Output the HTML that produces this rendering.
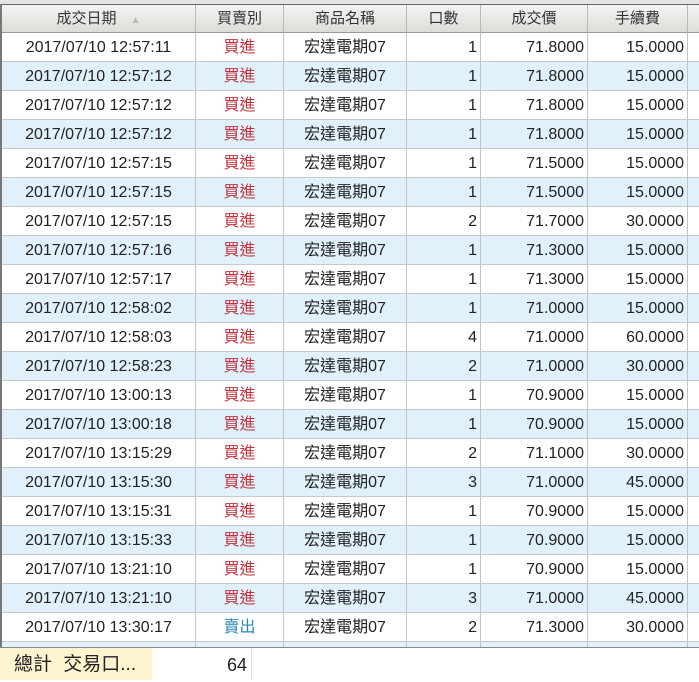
<!DOCTYPE html>
<html><head><meta charset="utf-8"><style>
body{margin:0;width:699px;height:680px;overflow:hidden;background:#fff;font-family:"Liberation Sans","Noto Sans CJK TC",sans-serif;font-size:16px;color:#222;position:relative}
.top{position:absolute;left:0;top:0;width:699px;height:4px;background:#e4e4e4;border-bottom:1px solid #666}
.lb{position:absolute;left:0;top:4px;width:2px;height:643px;background:#777}
.hdr{position:absolute;top:5px;height:27px;border-right:1px solid #b8b8b8;border-bottom:1px solid #9a9a9a;background:linear-gradient(#f4f4f2,#dcdcd8);text-align:center;line-height:27px;color:#333;font-size:15px}
.row{position:absolute;left:2px;width:697px;height:28px;border-bottom:1px solid #c8c8c8}
.alt{background:#e0f1fb}
.c{position:absolute;top:0;height:28px;line-height:29px;border-right:1px solid #c4c4c4;box-sizing:border-box}
.ctr{text-align:center}.r{text-align:right;padding-right:3px}
.red{color:#c0303a}.blue{color:#2a8ab8}
.bl{position:absolute;left:0;top:647px;width:699px;height:1px;background:#888}
.ft1{position:absolute;left:0;top:648px;width:152px;height:32px;background:#fdf4d0;line-height:34px;font-size:19px;padding-left:14px;box-sizing:border-box;word-spacing:6px}
.ft2{position:absolute;left:152px;top:648px;width:100px;height:32px;border-right:1px solid #ddd;text-align:right;line-height:34px;font-size:18px;padding-right:4px;box-sizing:border-box}
</style></head><body>
<div class="top"></div>
<div class="hdr" style="left:2px;width:193px">成交日期 <span style="color:#bbb;font-size:10px;margin-left:10px">▲</span></div>
<div class="hdr" style="left:196px;width:87px">買賣別</div>
<div class="hdr" style="left:284px;width:122px">商品名稱</div>
<div class="hdr" style="left:407px;width:73px">口數</div>
<div class="hdr" style="left:481px;width:106px">成交價</div>
<div class="hdr" style="left:588px;width:99px">手續費</div>
<div class="hdr" style="left:688px;width:11px;border-right:none"></div>
<div class="row" style="top:33px"><div class="c ctr" style="left:0;width:194px">2017/07/10 12:57:11</div><div class="c ctr red" style="left:194px;width:88px">買進</div><div class="c ctr" style="left:282px;width:123px">宏達電期07</div><div class="c r" style="left:405px;width:74px">1</div><div class="c r" style="left:479px;width:107px">71.8000</div><div class="c r" style="left:586px;width:100px">15.0000</div></div>
<div class="row alt" style="top:62px"><div class="c ctr" style="left:0;width:194px">2017/07/10 12:57:12</div><div class="c ctr red" style="left:194px;width:88px">買進</div><div class="c ctr" style="left:282px;width:123px">宏達電期07</div><div class="c r" style="left:405px;width:74px">1</div><div class="c r" style="left:479px;width:107px">71.8000</div><div class="c r" style="left:586px;width:100px">15.0000</div></div>
<div class="row" style="top:91px"><div class="c ctr" style="left:0;width:194px">2017/07/10 12:57:12</div><div class="c ctr red" style="left:194px;width:88px">買進</div><div class="c ctr" style="left:282px;width:123px">宏達電期07</div><div class="c r" style="left:405px;width:74px">1</div><div class="c r" style="left:479px;width:107px">71.8000</div><div class="c r" style="left:586px;width:100px">15.0000</div></div>
<div class="row alt" style="top:120px"><div class="c ctr" style="left:0;width:194px">2017/07/10 12:57:12</div><div class="c ctr red" style="left:194px;width:88px">買進</div><div class="c ctr" style="left:282px;width:123px">宏達電期07</div><div class="c r" style="left:405px;width:74px">1</div><div class="c r" style="left:479px;width:107px">71.8000</div><div class="c r" style="left:586px;width:100px">15.0000</div></div>
<div class="row" style="top:149px"><div class="c ctr" style="left:0;width:194px">2017/07/10 12:57:15</div><div class="c ctr red" style="left:194px;width:88px">買進</div><div class="c ctr" style="left:282px;width:123px">宏達電期07</div><div class="c r" style="left:405px;width:74px">1</div><div class="c r" style="left:479px;width:107px">71.5000</div><div class="c r" style="left:586px;width:100px">15.0000</div></div>
<div class="row alt" style="top:178px"><div class="c ctr" style="left:0;width:194px">2017/07/10 12:57:15</div><div class="c ctr red" style="left:194px;width:88px">買進</div><div class="c ctr" style="left:282px;width:123px">宏達電期07</div><div class="c r" style="left:405px;width:74px">1</div><div class="c r" style="left:479px;width:107px">71.5000</div><div class="c r" style="left:586px;width:100px">15.0000</div></div>
<div class="row" style="top:207px"><div class="c ctr" style="left:0;width:194px">2017/07/10 12:57:15</div><div class="c ctr red" style="left:194px;width:88px">買進</div><div class="c ctr" style="left:282px;width:123px">宏達電期07</div><div class="c r" style="left:405px;width:74px">2</div><div class="c r" style="left:479px;width:107px">71.7000</div><div class="c r" style="left:586px;width:100px">30.0000</div></div>
<div class="row alt" style="top:236px"><div class="c ctr" style="left:0;width:194px">2017/07/10 12:57:16</div><div class="c ctr red" style="left:194px;width:88px">買進</div><div class="c ctr" style="left:282px;width:123px">宏達電期07</div><div class="c r" style="left:405px;width:74px">1</div><div class="c r" style="left:479px;width:107px">71.3000</div><div class="c r" style="left:586px;width:100px">15.0000</div></div>
<div class="row" style="top:265px"><div class="c ctr" style="left:0;width:194px">2017/07/10 12:57:17</div><div class="c ctr red" style="left:194px;width:88px">買進</div><div class="c ctr" style="left:282px;width:123px">宏達電期07</div><div class="c r" style="left:405px;width:74px">1</div><div class="c r" style="left:479px;width:107px">71.3000</div><div class="c r" style="left:586px;width:100px">15.0000</div></div>
<div class="row alt" style="top:294px"><div class="c ctr" style="left:0;width:194px">2017/07/10 12:58:02</div><div class="c ctr red" style="left:194px;width:88px">買進</div><div class="c ctr" style="left:282px;width:123px">宏達電期07</div><div class="c r" style="left:405px;width:74px">1</div><div class="c r" style="left:479px;width:107px">71.0000</div><div class="c r" style="left:586px;width:100px">15.0000</div></div>
<div class="row" style="top:323px"><div class="c ctr" style="left:0;width:194px">2017/07/10 12:58:03</div><div class="c ctr red" style="left:194px;width:88px">買進</div><div class="c ctr" style="left:282px;width:123px">宏達電期07</div><div class="c r" style="left:405px;width:74px">4</div><div class="c r" style="left:479px;width:107px">71.0000</div><div class="c r" style="left:586px;width:100px">60.0000</div></div>
<div class="row alt" style="top:352px"><div class="c ctr" style="left:0;width:194px">2017/07/10 12:58:23</div><div class="c ctr red" style="left:194px;width:88px">買進</div><div class="c ctr" style="left:282px;width:123px">宏達電期07</div><div class="c r" style="left:405px;width:74px">2</div><div class="c r" style="left:479px;width:107px">71.0000</div><div class="c r" style="left:586px;width:100px">30.0000</div></div>
<div class="row" style="top:381px"><div class="c ctr" style="left:0;width:194px">2017/07/10 13:00:13</div><div class="c ctr red" style="left:194px;width:88px">買進</div><div class="c ctr" style="left:282px;width:123px">宏達電期07</div><div class="c r" style="left:405px;width:74px">1</div><div class="c r" style="left:479px;width:107px">70.9000</div><div class="c r" style="left:586px;width:100px">15.0000</div></div>
<div class="row alt" style="top:410px"><div class="c ctr" style="left:0;width:194px">2017/07/10 13:00:18</div><div class="c ctr red" style="left:194px;width:88px">買進</div><div class="c ctr" style="left:282px;width:123px">宏達電期07</div><div class="c r" style="left:405px;width:74px">1</div><div class="c r" style="left:479px;width:107px">70.9000</div><div class="c r" style="left:586px;width:100px">15.0000</div></div>
<div class="row" style="top:439px"><div class="c ctr" style="left:0;width:194px">2017/07/10 13:15:29</div><div class="c ctr red" style="left:194px;width:88px">買進</div><div class="c ctr" style="left:282px;width:123px">宏達電期07</div><div class="c r" style="left:405px;width:74px">2</div><div class="c r" style="left:479px;width:107px">71.1000</div><div class="c r" style="left:586px;width:100px">30.0000</div></div>
<div class="row alt" style="top:468px"><div class="c ctr" style="left:0;width:194px">2017/07/10 13:15:30</div><div class="c ctr red" style="left:194px;width:88px">買進</div><div class="c ctr" style="left:282px;width:123px">宏達電期07</div><div class="c r" style="left:405px;width:74px">3</div><div class="c r" style="left:479px;width:107px">71.0000</div><div class="c r" style="left:586px;width:100px">45.0000</div></div>
<div class="row" style="top:497px"><div class="c ctr" style="left:0;width:194px">2017/07/10 13:15:31</div><div class="c ctr red" style="left:194px;width:88px">買進</div><div class="c ctr" style="left:282px;width:123px">宏達電期07</div><div class="c r" style="left:405px;width:74px">1</div><div class="c r" style="left:479px;width:107px">70.9000</div><div class="c r" style="left:586px;width:100px">15.0000</div></div>
<div class="row alt" style="top:526px"><div class="c ctr" style="left:0;width:194px">2017/07/10 13:15:33</div><div class="c ctr red" style="left:194px;width:88px">買進</div><div class="c ctr" style="left:282px;width:123px">宏達電期07</div><div class="c r" style="left:405px;width:74px">1</div><div class="c r" style="left:479px;width:107px">70.9000</div><div class="c r" style="left:586px;width:100px">15.0000</div></div>
<div class="row" style="top:555px"><div class="c ctr" style="left:0;width:194px">2017/07/10 13:21:10</div><div class="c ctr red" style="left:194px;width:88px">買進</div><div class="c ctr" style="left:282px;width:123px">宏達電期07</div><div class="c r" style="left:405px;width:74px">1</div><div class="c r" style="left:479px;width:107px">70.9000</div><div class="c r" style="left:586px;width:100px">15.0000</div></div>
<div class="row alt" style="top:584px"><div class="c ctr" style="left:0;width:194px">2017/07/10 13:21:10</div><div class="c ctr red" style="left:194px;width:88px">買進</div><div class="c ctr" style="left:282px;width:123px">宏達電期07</div><div class="c r" style="left:405px;width:74px">3</div><div class="c r" style="left:479px;width:107px">71.0000</div><div class="c r" style="left:586px;width:100px">45.0000</div></div>
<div class="row" style="top:613px"><div class="c ctr" style="left:0;width:194px">2017/07/10 13:30:17</div><div class="c ctr blue" style="left:194px;width:88px">賣出</div><div class="c ctr" style="left:282px;width:123px">宏達電期07</div><div class="c r" style="left:405px;width:74px">2</div><div class="c r" style="left:479px;width:107px">71.3000</div><div class="c r" style="left:586px;width:100px">30.0000</div></div>
<div class="row alt" style="top:642px;height:5px;border:none"><div class="c" style="left:0;width:194px;height:5px"></div><div class="c" style="left:194px;width:88px;height:5px"></div><div class="c" style="left:282px;width:123px;height:5px"></div><div class="c" style="left:405px;width:74px;height:5px"></div><div class="c" style="left:479px;width:107px;height:5px"></div><div class="c" style="left:586px;width:100px;height:5px"></div></div>
<div class="lb"></div>
<div class="bl"></div>
<div class="ft1">總計 交易口...</div>
<div class="ft2">64</div>
</body></html>
